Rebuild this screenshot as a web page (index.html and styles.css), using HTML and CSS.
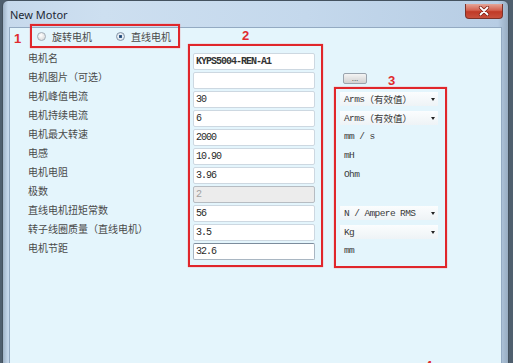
FILE: index.html
```html
<!DOCTYPE html>
<html lang="zh-CN">
<head>
  <meta charset="UTF-8" />
  <meta name="viewport" content="width=device-width, initial-scale=1.0" />
  <title>New Motor</title>
  <link rel="stylesheet" href="styles.css">
</head>
<body>
  <div class="window">
    <div class="titlebar">
      <span class="title">New Motor</span>
      <button class="close">
        <svg width="12" height="10" viewBox="0 0 12 10">
          <path d="M2.5 1.5 L9.5 8.5 M9.5 1.5 L2.5 8.5" stroke="#7a1e14" stroke-width="3.2" stroke-linecap="round"/>
          <path d="M2.5 1.5 L9.5 8.5 M9.5 1.5 L2.5 8.5" stroke="#ffffff" stroke-width="1.8" stroke-linecap="round"/>
        </svg>
      </button>
    </div>

    <div class="client">
      <div class="col-labels">
        <div class="type-row">
          <span class="mark mark1">1</span>
          <div class="box box1">
            <label class="radio"><span class="dot"></span>旋转电机</label>
            <label class="radio checked"><span class="dot"></span>直线电机</label>
          </div>
        </div>
        <div class="label">电机名</div>
        <div class="label">电机图片（可选）</div>
        <div class="label">电机峰值电流</div>
        <div class="label">电机持续电流</div>
        <div class="label">电机最大转速</div>
        <div class="label">电感</div>
        <div class="label">电机电阻</div>
        <div class="label">极数</div>
        <div class="label">直线电机扭矩常数</div>
        <div class="label">转子线圈质量（直线电机）</div>
        <div class="label">电机节距</div>
      </div>

      <div class="col-inputs">
        <span class="mark mark2">2</span>
        <div class="box box2">
          <input class="field strong" value="KYPS5004-REN-A1" readonly>
          <input class="field" value="" readonly>
          <input class="field" value="30" readonly>
          <input class="field" value="6" readonly>
          <input class="field" value="2000" readonly>
          <input class="field" value="10.90" readonly>
          <input class="field" value="3.96" readonly>
          <input class="field" value="2" disabled>
          <input class="field" value="56" readonly>
          <input class="field" value="3.5" readonly>
          <input class="field focused" value="32.6" readonly>
        </div>
      </div>

      <div class="col-units">
        <div class="units-top">
          <button class="browse">...</button>
          <span class="mark mark3">3</span>
        </div>
        <div class="box box3">
          <div class="unit"><span class="select">Arms<span class="cjk">（有效值）</span><span class="arrow"></span></span></div>
          <div class="unit"><span class="select">Arms<span class="cjk">（有效值）</span><span class="arrow"></span></span></div>
          <div class="unit text">mm / s</div>
          <div class="unit text">mH</div>
          <div class="unit text">Ohm</div>
          <div class="unit"></div>
          <div class="unit"><span class="select">N / Ampere RMS<span class="arrow"></span></span></div>
          <div class="unit"><span class="select">Kg<span class="arrow"></span></span></div>
          <div class="unit text">mm</div>
        </div>
        <span class="mark mark4">4</span>
      </div>
    </div>
  </div>
</body>
</html>
```

FILE: styles.css
```css
body {
  margin: 0;
  height: 363px;
  overflow: hidden;
  background: #4f5f6e;
  font-family: "Noto Sans CJK SC", "Noto Sans", sans-serif;
}
.window {
  margin: 0 4px 0 2px;
  height: 380px;
  padding: 0 6px;
  border: 1px solid #44525f;
  border-radius: 6px 6px 0 0;
  background: linear-gradient(90deg, #9fb3c7 0px, #c6d9ec 5px, #cddff0 20%, #c4d8ec 60%, #b7cde4 98%, #98adc2 100%);
}
.titlebar {
  height: 26px;
  display: flex;
  align-items: flex-start;
}
.title {
  margin: 7px 0 0 1px;
  font-family: "Noto Sans", sans-serif;
  font-size: 11px;
  line-height: 14px;
  color: #1e2a36;
}
.close {
  margin: 3px -1px 0 auto;
  width: 38px;
  height: 15px;
  padding: 0;
  border: 1px solid #7d3128;
  border-top: none;
  border-radius: 0 0 4px 4px;
  background: linear-gradient(180deg, #e5a597 0%, #d3604e 45%, #c03a27 55%, #c8503c 100%);
  display: flex;
  align-items: center;
  justify-content: center;
}
.client {
  height: 340px;
  border: 1px solid #93aac2;
  background: #e4f5fc;
  display: flex;
  align-items: flex-start;
}

/* annotation marks */
.mark {
  font-family: "Liberation Sans", Arial, sans-serif;
  font-weight: bold;
  font-size: 13px;
  line-height: 14px;
  color: #e02a2e;
}
.box {
  box-sizing: border-box;
  border: 2px solid #e0262b;
  box-shadow: 0 0 1px #f07070;
}

/* labels column */
.col-labels {
  width: 174px;
  padding-left: 4px;
}
.type-row {
  margin-top: -4px;
  height: 24px;
  display: flex;
  align-items: flex-start;
}
.mark1 {
  margin-top: 8px;
  width: 8px;
}
.box1 {
  margin-left: 8px;
  width: 150px;
  height: 24px;
  padding-left: 5px;
  display: flex;
  align-items: center;
  gap: 24px;
}
.radio {
  display: flex;
  align-items: center;
  gap: 6px;
  font-size: 10px;
  color: #4a4a4a;
}
.dot {
  box-sizing: border-box;
  width: 9px;
  height: 9px;
  border-radius: 50%;
  border: 1px solid #a3adb7;
  background: radial-gradient(circle at 40% 35%, #ffffff 0%, #e4e4e4 60%, #cfd3d7 100%);
}
.checked .dot {
  background: radial-gradient(circle, #1f3f66 0%, #3c6796 32%, #e8eef4 40%, #d7dde3 100%);
  border-color: #8596a8;
}
.label {
  padding-left: 14px;
  font-size: 10px;
  line-height: 19px;
  color: #4a4a4a;
}
.label:first-of-type {
  margin-top: 3px;
}

/* inputs column */
.col-inputs {
  width: 135px;
}
.mark2 {
  display: block;
  padding-left: 54px;
  line-height: 16px;
}
.box2 {
  width: 135px;
  height: 223px;
  padding: 7px 6px 5px 3px;
  display: flex;
  flex-direction: column;
  gap: 2px;
}
.field {
  box-sizing: border-box;
  width: 122px;
  height: 17px;
  margin: 0;
  padding: 0 2px;
  border: 1px solid #cdd8e1;
  border-radius: 2px;
  background: #fff;
  font-family: "Liberation Mono", monospace;
  font-size: 10px;
  letter-spacing: -1px;
  color: #2a2a2a;
  outline: none;
}
.field.strong {
  font-weight: bold;
  color: #333;
}
.field:disabled {
  background: #ececec;
  border-color: #b6bcc2;
  color: #a0a0a0;
}
.field.focused {
  border-color: #a9b6c2;
  border-top-color: #7c8c9c;
}

/* units column */
.col-units {
  width: 170px;
}
.units-top {
  margin-top: 45px;
  height: 14px;
  display: flex;
  align-items: flex-start;
}
.browse {
  margin-left: 20px;
  width: 24px;
  height: 11px;
  padding: 0;
  border: 1px solid #9aa4ae;
  border-radius: 2px;
  background: linear-gradient(180deg, #f4f4f4 0%, #e2e2e2 50%, #d2d2d2 100%);
  font-size: 8px;
  line-height: 6px;
  color: #333;
}
.mark3 {
  margin: 1px 0 0 21px;
}
.box3 {
  margin-left: 11px;
  width: 113px;
  height: 181px;
  padding: 0 0 6px 4px;
}
.unit {
  box-sizing: border-box;
  height: 19px;
  padding-top: 3px;
  font-family: "Liberation Mono", monospace;
  font-size: 9.5px;
  letter-spacing: -0.6px;
  color: #3a3a3a;
}
.unit.text {
  padding: 0 0 0 4px;
  line-height: 19px;
}
.select {
  box-sizing: border-box;
  width: 98px;
  height: 14px;
  padding-left: 4px;
  display: flex;
  align-items: center;
  background: linear-gradient(180deg, #fbfdfe 0%, #eef3f6 100%);
  position: relative;
}
.cjk {
  font-family: "Noto Sans CJK SC", sans-serif;
  font-size: 9.5px;
  letter-spacing: 0;
}
.arrow {
  position: absolute;
  right: 3px;
  top: 6px;
  border-left: 2.5px solid transparent;
  border-right: 2.5px solid transparent;
  border-top: 3px solid #222;
}
.mark4 {
  display: block;
  margin: 91px 0 0 102px;
}
```
